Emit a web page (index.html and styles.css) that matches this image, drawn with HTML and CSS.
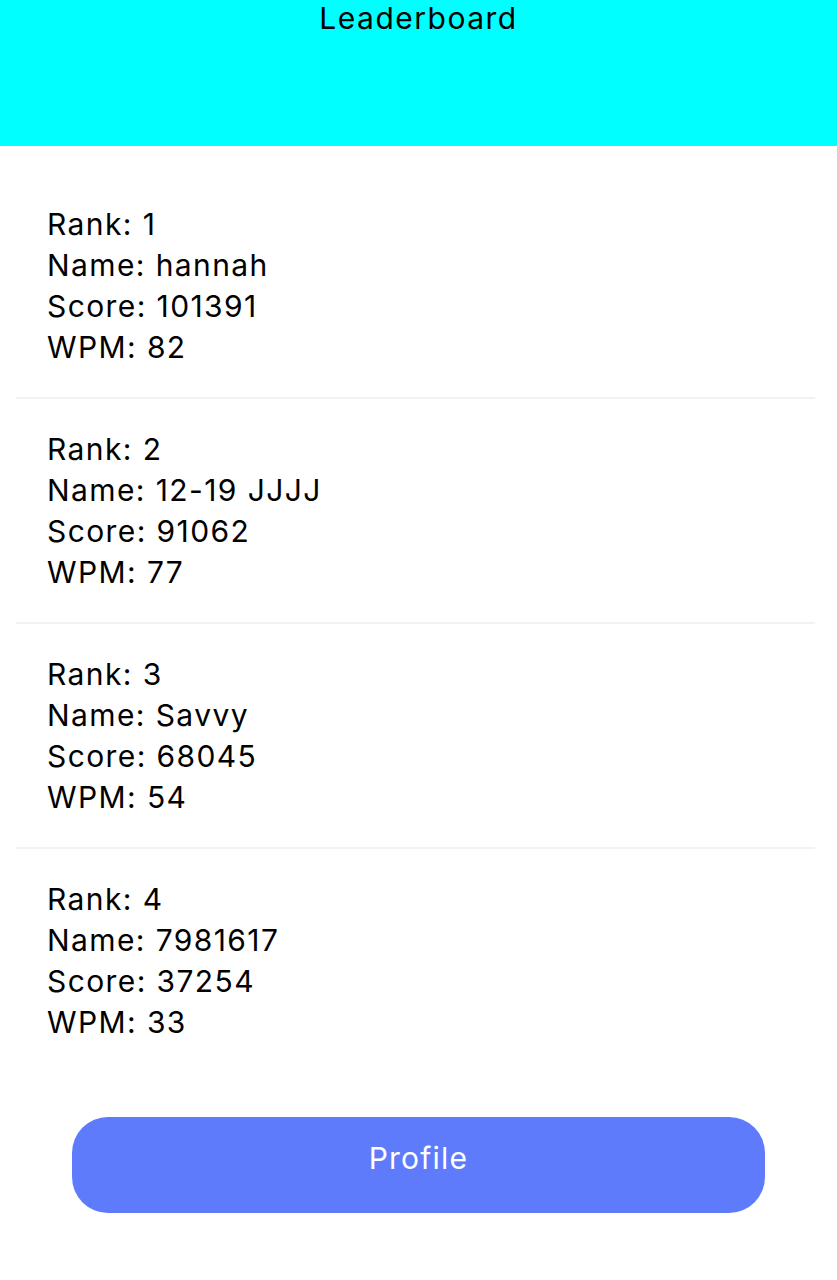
FILE: index.html
```html
<!DOCTYPE html>
<html>
<head>
<meta charset="utf-8">
<link rel="stylesheet" href="styles.css">
</head>
<body>
<header class="header">
  <h1 class="title">Leaderboard</h1>
</header>
<main class="list">
  <div class="item">
    <div>Rank: 1</div>
    <div>Name: hannah</div>
    <div>Score: 101391</div>
    <div>WPM: 82</div>
  </div>
  <div class="item">
    <div>Rank: 2</div>
    <div>Name: 12-19 JJJJ</div>
    <div>Score: 91062</div>
    <div>WPM: 77</div>
  </div>
  <div class="item">
    <div>Rank: 3</div>
    <div>Name: Savvy</div>
    <div>Score: 68045</div>
    <div>WPM: 54</div>
  </div>
  <div class="item last">
    <div>Rank: 4</div>
    <div>Name: 7981617</div>
    <div>Score: 37254</div>
    <div>WPM: 33</div>
  </div>
</main>
<div class="actions">
  <button class="btn">Profile</button>
</div>
</body>
</html>
```

FILE: styles.css
```css
* { box-sizing: border-box; }
html, body {
  margin: 0;
  padding: 0;
  background: #ffffff;
  font-family: Inter, "Noto Sans", "Liberation Sans", sans-serif;
  color: #000;
}
.header {
  height: 146px;
  background: #00ffff;
  display: flex;
  justify-content: center;
  align-items: flex-start;
}
.title {
  margin: 0;
  font-weight: 400;
  font-size: 30px;
  line-height: 36px;
  letter-spacing: 1.5px;
}
.list {
  padding: 28px 22px 0 16px;
}
.item {
  padding: 30px 0 29px 31px;
  border-bottom: 2px solid #f2f2f2;
  font-size: 30px;
  line-height: 41px;
  letter-spacing: 1.4px;
}
.item.last {
  border-bottom: none;
}
.actions {
  padding: 45px 72px 0 72px;
  display: flex;
}
.btn {
  width: 693px;
  height: 96px;
  padding: 0 0 15px 0;
  border: none;
  border-radius: 36px;
  background: #5e7bfc;
  color: #fff;
  font-family: Inter, "Noto Sans", "Liberation Sans", sans-serif;
  font-size: 30px;
  letter-spacing: 1.2px;
}
```
